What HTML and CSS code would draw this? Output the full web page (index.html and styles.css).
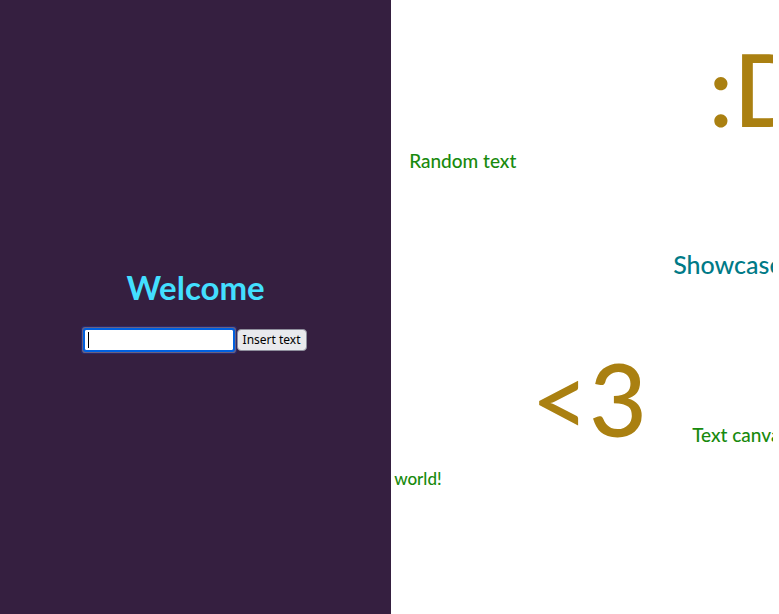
FILE: index.html
```html
<!DOCTYPE html>
<html lang="en">
<head>
<meta charset="utf-8">
<title>Text canvas</title>
<link rel="stylesheet" href="styles.css">
</head>
<body>
<main class="layout">
  <section class="panel">
    <h1 class="title">Welcome</h1>
    <form class="entry">
      <input class="entry-text" type="text" aria-label="Text" autocomplete="off" autofocus>
      <button class="entry-button" type="button">Insert text</button>
    </form>
  </section>
  <section class="canvas">
    <span class="word huge smile">:D</span>
    <span class="word small random">Random text</span>
    <span class="word medium showcase">Showcase</span>
    <span class="word huge heart">&lt;3</span>
    <span class="word small text-canvas">Text canvas</span>
    <span class="word tiny world">world!</span>
  </section>
</main>
</body>
</html>
```
FILE: styles.css
```css
* { box-sizing: border-box; }
body {
  margin: 0;
  padding-right: 6px;
  background: #fff;
  font-family: "Trebuchet MS", Lato, sans-serif;
}
.layout { display: flex; min-height: 100vh; }
.panel {
  flex: 0 0 50.6%;
  display: flex;
  flex-direction: column;
  align-items: center;
  justify-content: center;
  gap: 20px;
  padding-top: 2px;
  background: #351f40;
}
.title {
  margin: 0;
  color: #43dfff;
  font-size: 33px;
  line-height: 44px;
  font-weight: 700;
}
.entry { display: flex; align-items: center; gap: 4px; }
.entry-text {
  width: 148px;
  height: 20px;
  padding: 1px 3px;
  border: 0;
  border-radius: 1px;
  background: linear-gradient(#000, #000) 3px 50% / 1px 16px no-repeat #fff;
  caret-color: transparent;
  font-family: Tahoma, "Noto Sans", sans-serif;
  font-size: 13px;
  outline: 2px solid #0060df;
  box-shadow: 0 0 0 3px #6a6180, 0 0 0 4px #2a286b;
}
.entry-button {
  height: 22px;
  padding: 0 5px;
  border: 1px solid #8f8f9d;
  border-radius: 4px;
  background: #e9e9ed;
  color: #000;
  font-family: Tahoma, "Noto Sans", sans-serif;
  font-size: 12px;
  line-height: 20px;
}
.canvas { position: relative; flex: 1; overflow: hidden; }
.word { position: absolute; line-height: 1; white-space: nowrap; font-weight: 500; }
.huge { color: #aa8011; font-size: 100px; }
.medium { color: #007a87; font-size: 25px; }
.small { color: #188a0d; font-size: 19px; }
.tiny { color: #188a0d; font-size: 17px; }
.smile { left: 317px; top: 38px; }
.random { left: 18px; top: 151px; }
.showcase { left: 282px; top: 252px; }
.heart { left: 140px; top: 348px; }
.text-canvas { left: 301px; top: 425px; }
.world { left: 3px; top: 470px; }
```
